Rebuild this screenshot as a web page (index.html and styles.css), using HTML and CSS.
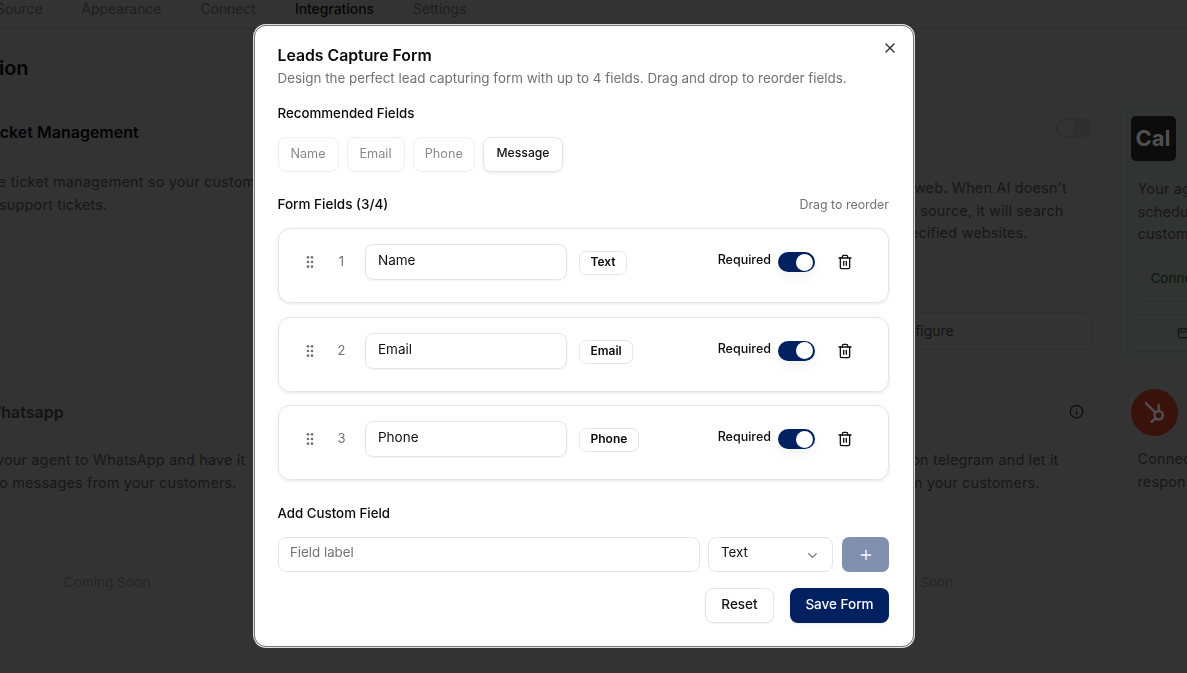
FILE: index.html
```html
<!DOCTYPE html>
<html lang="en">
<head>
    <meta charset="UTF-8">
    <title>Leads Capture Form</title>
    <link rel="stylesheet" href="styles.css">
</head>
<body>

    <!-- Page behind the modal -->
    <div class="page">
        <nav class="tabs">
            <a>Source</a>
            <a>Appearance</a>
            <a>Connect</a>
            <a class="active">Integrations</a>
            <a>Settings</a>
        </nav>

        <h2 class="page-title">Action</h2>

        <div class="cards">
            <div class="card">
                <h3>Ticket Management</h3>
                <p class="card-text">
                    <span>Enable the ticket management so your customers can</span>
                    <span>to create support tickets.</span>
                </p>
            </div>
            <div class="card"></div>
            <div class="card">
                <div class="toggle-off"></div>
                <p class="card-text card-text-low">
                    <span>Let the agent browse the web. When AI doesn't</span>
                    <span>find the answer inside the source, it will search</span>
                    <span>the web using all your specified websites.</span>
                </p>
                <div class="card-btn">Configure</div>
            </div>
            <div class="card card-green">
                <div class="cal-logo">Cal</div>
                <p class="card-text">
                    <span>Your agent can now</span>
                    <span>schedule meetings</span>
                    <span>customers directly</span>
                </p>
                <div class="connect-btn">Connect</div>
                <div class="card-btn card-btn-side">
                    <svg viewBox="0 0 24 24" fill="none" stroke="currentColor" stroke-width="2">
                        <rect x="4" y="5" width="16" height="15" rx="2"/><path d="M4 10h16"/><path d="M9 3v4"/><path d="M15 3v4"/>
                    </svg>
                    Settings
                </div>
            </div>

            <div class="card">
                <h3 class="title-low">Whatsapp</h3>
                <p class="card-text">
                    <span>Connect your agent to WhatsApp and have it</span>
                    <span>respond to messages from your customers.</span>
                </p>
                <div class="soon">Coming Soon</div>
            </div>
            <div class="card"></div>
            <div class="card">
                <svg class="info" viewBox="0 0 24 24" fill="none" stroke="currentColor" stroke-width="2" stroke-linecap="round">
                    <circle cx="12" cy="12" r="10"/><path d="M12 16v-4"/><path d="M12 8h.01"/>
                </svg>
                <p class="card-text card-text-mid">
                    <span>Connect your new agent on telegram and let it</span>
                    <span>respond to messages from your customers.</span>
                </p>
                <div class="soon">Coming Soon</div>
            </div>
            <div class="card">
                <div class="hubspot">
                    <svg viewBox="0 0 24 24" fill="none" stroke="currentColor" stroke-width="2" stroke-linecap="round">
                        <circle cx="16" cy="14" r="3.6"/><path d="M16 10V5"/><path d="M13 11.5 5 3.5"/><path d="M13.5 16.5 10 19.5"/>
                    </svg>
                </div>
                <p class="card-text">
                    <span>Connect your</span>
                    <span>responses to</span>
                </p>
            </div>
        </div>
    </div>

    <!-- Modal -->
    <div class="overlay">
        <div class="modal">
            <button class="close">
                <svg viewBox="0 0 24 24" fill="none" stroke="currentColor" stroke-width="2" stroke-linecap="round">
                    <path d="M18 6 6 18"/><path d="m6 6 12 12"/>
                </svg>
            </button>

            <h1>Leads Capture Form</h1>
            <p class="subtitle">Design the perfect lead capturing form with up to 4 fields. Drag and drop to reorder fields.</p>

            <h4 class="section-label">Recommended Fields</h4>
            <div class="chips">
                <span class="chip chip-used chip-name">Name</span>
                <span class="chip chip-used chip-email">Email</span>
                <span class="chip chip-used chip-phone">Phone</span>
                <span class="chip chip-message">Message</span>
            </div>

            <div class="fields-head">
                <h4>Form Fields (3/4)</h4>
                <span>Drag to reorder</span>
            </div>

            <div class="field-row">
                <svg class="grip" viewBox="0 0 24 24" fill="currentColor">
                    <circle cx="9" cy="5" r="2"/><circle cx="15" cy="5" r="2"/><circle cx="9" cy="12" r="2"/><circle cx="15" cy="12" r="2"/><circle cx="9" cy="19" r="2"/><circle cx="15" cy="19" r="2"/>
                </svg>
                <span class="num">1</span>
                <div class="field-input">Name</div>
                <span class="badge">Text</span>
                <span class="req">Required</span>
                <span class="toggle"></span>
                <svg class="trash" viewBox="0 0 24 24" fill="none" stroke="currentColor" stroke-width="2" stroke-linecap="round" stroke-linejoin="round">
                    <path d="M3 6h18"/><path d="M19 6v14a2 2 0 0 1-2 2H7a2 2 0 0 1-2-2V6"/><path d="M8 6V4a2 2 0 0 1 2-2h4a2 2 0 0 1 2 2v2"/><path d="M10 11v6"/><path d="M14 11v6"/>
                </svg>
            </div>

            <div class="field-row">
                <svg class="grip" viewBox="0 0 24 24" fill="currentColor">
                    <circle cx="9" cy="5" r="2"/><circle cx="15" cy="5" r="2"/><circle cx="9" cy="12" r="2"/><circle cx="15" cy="12" r="2"/><circle cx="9" cy="19" r="2"/><circle cx="15" cy="19" r="2"/>
                </svg>
                <span class="num">2</span>
                <div class="field-input">Email</div>
                <span class="badge">Email</span>
                <span class="req">Required</span>
                <span class="toggle"></span>
                <svg class="trash" viewBox="0 0 24 24" fill="none" stroke="currentColor" stroke-width="2" stroke-linecap="round" stroke-linejoin="round">
                    <path d="M3 6h18"/><path d="M19 6v14a2 2 0 0 1-2 2H7a2 2 0 0 1-2-2V6"/><path d="M8 6V4a2 2 0 0 1 2-2h4a2 2 0 0 1 2 2v2"/><path d="M10 11v6"/><path d="M14 11v6"/>
                </svg>
            </div>

            <div class="field-row">
                <svg class="grip" viewBox="0 0 24 24" fill="currentColor">
                    <circle cx="9" cy="5" r="2"/><circle cx="15" cy="5" r="2"/><circle cx="9" cy="12" r="2"/><circle cx="15" cy="12" r="2"/><circle cx="9" cy="19" r="2"/><circle cx="15" cy="19" r="2"/>
                </svg>
                <span class="num">3</span>
                <div class="field-input">Phone</div>
                <span class="badge">Phone</span>
                <span class="req">Required</span>
                <span class="toggle"></span>
                <svg class="trash" viewBox="0 0 24 24" fill="none" stroke="currentColor" stroke-width="2" stroke-linecap="round" stroke-linejoin="round">
                    <path d="M3 6h18"/><path d="M19 6v14a2 2 0 0 1-2 2H7a2 2 0 0 1-2-2V6"/><path d="M8 6V4a2 2 0 0 1 2-2h4a2 2 0 0 1 2 2v2"/><path d="M10 11v6"/><path d="M14 11v6"/>
                </svg>
            </div>

            <h4 class="section-label custom-label">Add Custom Field</h4>
            <div class="custom-row">
                <div class="custom-input">Field label</div>
                <div class="custom-select">
                    <span>Text</span>
                    <svg viewBox="0 0 24 24" fill="none" stroke="currentColor" stroke-width="2" stroke-linecap="round" stroke-linejoin="round">
                        <path d="m6 9 6 6 6-6"/>
                    </svg>
                </div>
                <button class="add-btn">
                    <svg viewBox="0 0 24 24" fill="none" stroke="currentColor" stroke-width="2" stroke-linecap="round">
                        <path d="M5 12h14"/><path d="M12 5v14"/>
                    </svg>
                </button>
            </div>

            <div class="actions">
                <button class="btn-reset">Reset</button>
                <button class="btn-save">Save Form</button>
            </div>
        </div>
    </div>

</body>
</html>
```

FILE: styles.css
```css
/* Page */
html, body {
    margin: 0;
    padding: 0;
    height: 100%;
    overflow: hidden;
}

body {
    font-family: 'Inter', sans-serif;
    background-color: #fff;
    color: #111;
}

h1, h2, h3, h4, p {
    margin: 0;
}

button {
    font-family: inherit;
    cursor: pointer;
}

.page {
    width: 1187px;
    height: 673px;
    overflow: hidden;
}

/* Tabs */
.tabs {
    display: flex;
    gap: 39px;
    height: 28px;
    margin-left: -4px;
    border-bottom: 1px solid #e5e5e5;
    font-size: 13.9px;
    color: #999;
    line-height: 19px;
}

.tabs .active {
    color: #222;
    font-weight: 500;
}

.page-title {
    margin: 27px 0 0 -34px;
    font-size: 20px;
    line-height: 24px;
    font-weight: 600;
    height: 20px;
}

/* Cards */
.cards {
    display: grid;
    grid-template-columns: repeat(4, 384px);
    grid-template-rows: 261px 235px;
    gap: 17px 17.5px;
    margin: 24px 0 0 -85px;
}

.card {
    position: relative;
    box-sizing: border-box;
    padding: 22px 17px 0;
    border: 1px solid #eee;
    border-radius: 12px;
}

.card h3 {
    font-size: 16px;
    font-weight: 600;
    line-height: 18px;
    padding-left: 52px;
    height: 48px;
    white-space: nowrap;
}

.card h3.title-low {
    padding-top: 2px;
    height: 46px;
    color: #666;
}

.card-text span {
    display: block;
    font-size: 14.5px;
    letter-spacing: 0.13px;
    line-height: 22.5px;
    white-space: nowrap;
    color: #777;
}

.card-text-low {
    margin-top: 54px;
}

.card-text-mid {
    margin-top: 48px;
}

.card-btn {
    margin: 67px -8px 0;
    box-sizing: border-box;
    height: 38px;
    padding-left: 22px;
    line-height: 36px;
    border: 1px solid #e5e5e5;
    border-radius: 8px;
    text-align: center;
    font-size: 14px;
    color: #666;
}

.card-btn-side {
    display: flex;
    align-items: center;
    gap: 8px;
    margin-top: 12px;
    padding-left: 45px;
}

.card-btn-side svg {
    width: 14px;
    height: 14px;
}

.soon {
    margin: 69px -8px 0;
    box-sizing: border-box;
    height: 38px;
    line-height: 36px;
    text-align: center;
    font-size: 13.6px;
    color: #bbb;
    border: 1px solid #f4f4f4;
    border-radius: 8px;
}

.card-green {
    border-color: #dcf2e3;
    background-color: #fbfefc;
}

.toggle-off {
    position: absolute;
    top: 17px;
    right: 10px;
    width: 35px;
    height: 20px;
    border-radius: 10px;
    background-color: #e5e5e5;
}

.toggle-off::after {
    content: "";
    display: block;
    width: 16px;
    height: 16px;
    margin: 2px;
    border-radius: 50%;
    background-color: #fff;
}

/* these two logos sit above the overlay so they keep their own dimmed colours */
.cal-logo {
    position: relative;
    z-index: 2;
    width: 45px;
    height: 45px;
    margin: -7px 0 17px -7px;
    border-radius: 5px;
    background-color: #0c0c0c;
    color: #505050;
    font-size: 22px;
    font-weight: 700;
    line-height: 45px;
    text-align: center;
}

.connect-btn {
    width: 120px;
    height: 43px;
    margin-top: 11px;
    border: 1px solid #d5f0de;
    border-radius: 8px;
    padding-left: 12px;
    line-height: 41px;
    font-size: 13.5px;
    color: #15803d;
}

.info {
    position: absolute;
    top: 25px;
    right: 17px;
    width: 15px;
    height: 15px;
    color: #333;
}

.hubspot {
    position: relative;
    z-index: 2;
    width: 47px;
    height: 47px;
    margin: -12px 0 12px -7px;
    border-radius: 50%;
    background-color: #3a120c;
    color: #4f4f4f;
    display: flex;
    align-items: center;
    justify-content: center;
}

.hubspot svg {
    width: 28px;
    height: 28px;
}

/* Modal */
.overlay {
    position: fixed;
    inset: 0;
    z-index: 1;
    background-color: rgba(0, 0, 0, 0.8);
}

.modal {
    position: absolute;
    left: 254px;
    top: 25px;
    box-sizing: border-box;
    width: 660px;
    height: 622px;
    padding: 19px 24px 0 22.5px;
    background-color: #fff;
    border: 1px solid #777;
    border-radius: 12px;
    box-shadow: 0 0 0 1px #ddd;
}

.close {
    position: absolute;
    top: 14px;
    right: 15px;
    width: 16px;
    height: 16px;
    padding: 0;
    border: none;
    background: none;
    color: #333;
    display: flex;
}

.modal h1 {
    font-size: 15.8px;
    font-weight: 600;
    line-height: 21px;
    color: #0a0a0a;
}

.subtitle {
    margin-top: 2px;
    font-size: 13.4px;
    line-height: 20px;
    color: #71717a;
}

.section-label {
    margin-top: 15px;
    font-size: 13.3px;
    font-weight: 500;
    line-height: 20px;
    color: #0a0a0a;
}

/* Chips */
.chips {
    display: flex;
    gap: 8px;
    margin-top: 14px;
}

.chip {
    box-sizing: border-box;
    height: 35px;
    line-height: 31px;
    text-align: center;
    font-size: 12.7px;
    border: 1px solid #efefef;
    border-radius: 8px;
}

.chip-used {
    color: #8a8a8a;
}

.chip-name { width: 61px; }
.chip-email { width: 58px; }
.chip-phone { width: 62.5px; }

.chip-message {
    width: 80px;
    font-size: 12.2px;
    line-height: 30px;
    color: #111;
    font-weight: 500;
    border-color: #e5e5e5;
    box-shadow: 0 1px 3px rgba(0, 0, 0, 0.1);
}

/* Form fields */
.fields-head {
    display: flex;
    justify-content: space-between;
    align-items: center;
    margin: 22px 0 14px;
    height: 20px;
}

.fields-head h4 {
    font-size: 13.5px;
    font-weight: 500;
    color: #0a0a0a;
}

.fields-head span {
    font-size: 12.4px;
    color: #71717a;
}

.field-row {
    display: flex;
    align-items: flex-start;
    box-sizing: border-box;
    height: 75px;
    margin-bottom: 13.5px;
    padding: 15px 29px 0 23.5px;
    border: 1px solid #e5e5e5;
    border-radius: 12px;
    box-shadow: 0 1px 3px rgba(0, 0, 0, 0.1);
}

.grip {
    flex: none;
    width: 16px;
    height: 16px;
    margin-top: 10px;
    color: #71717a;
}

.num {
    flex: none;
    width: 23px;
    margin: 0 12px;
    text-align: center;
    font-size: 13px;
    line-height: 34px;
    color: #71717a;
}

.field-input {
    flex: none;
    box-sizing: border-box;
    width: 202px;
    height: 36px;
    padding-left: 12px;
    line-height: 30px;
    font-size: 13.5px;
    color: #111;
    border: 1px solid #e5e5e5;
    border-radius: 8px;
    box-shadow: 0 1px 2px rgba(0, 0, 0, 0.05);
}

.badge {
    margin: 7px 0 0 12px;
    box-sizing: border-box;
    height: 24px;
    padding: 0 10.5px;
    line-height: 20px;
    font-size: 12px;
    font-weight: 600;
    color: #0a0a0a;
    border: 1px solid #e5e5e5;
    border-radius: 7px;
}

.req {
    margin: 6px 7px 0 auto;
    font-size: 12.5px;
    font-weight: 500;
    line-height: 20px;
    color: #0a0a0a;
}

.toggle {
    flex: none;
    position: relative;
    width: 37px;
    height: 20px;
    margin-top: 8px;
    border-radius: 10px;
    background-color: #00205f;
    box-shadow: 0 6px 12px rgba(0, 0, 0, 0.05);
}

.toggle::after {
    content: "";
    position: absolute;
    top: 1.5px;
    right: 2px;
    width: 17px;
    height: 17px;
    border-radius: 50%;
    background-color: #fff;
}

.trash {
    flex: none;
    width: 16px;
    height: 16px;
    margin: 10px 6px 0 22px;
    color: #111;
}

/* Custom field */
.custom-label {
    margin-top: 23px;
}

.custom-row {
    display: flex;
    gap: 8px;
    margin-top: 14px;
}

.custom-input, .custom-select {
    box-sizing: border-box;
    height: 35px;
    line-height: 29px;
    font-size: 13.3px;
    border: 1px solid #e5e5e5;
    border-radius: 8px;
}

.custom-input {
    flex: 1;
    padding-left: 11.5px;
    color: #71717a;
}

.custom-select {
    display: flex;
    justify-content: space-between;
    align-items: flex-start;
    width: 125px;
    padding: 0 12px;
    color: #111;
}

.custom-select svg {
    width: 15px;
    height: 15px;
    margin-top: 10px;
    color: #71717a;
}

.add-btn {
    width: 47px;
    height: 35px;
    margin-left: 1px;
    padding: 0;
    border: none;
    border-radius: 7px;
    background-color: #8090ae;
    color: #fff;
}

.add-btn svg {
    width: 16px;
    height: 16px;
    display: block;
    margin: 0 auto;
}

/* Buttons */
.actions {
    display: flex;
    justify-content: flex-end;
    gap: 16px;
    margin-top: 16px;
}

.actions button {
    box-sizing: border-box;
    height: 35px;
    padding: 0 0 3px;
    font-size: 13.5px;
    font-weight: 500;
    border-radius: 8px;
}

.btn-reset {
    width: 69px;
    background-color: #fff;
    color: #111;
    border: 1px solid #e5e5e5;
    box-shadow: 0 1px 2px rgba(0, 0, 0, 0.05);
}

.btn-save {
    width: 99px;
    background-color: #00205f;
    color: #fff;
    border: none;
    box-shadow: 0 1px 2px rgba(0, 0, 0, 0.1);
}
```
